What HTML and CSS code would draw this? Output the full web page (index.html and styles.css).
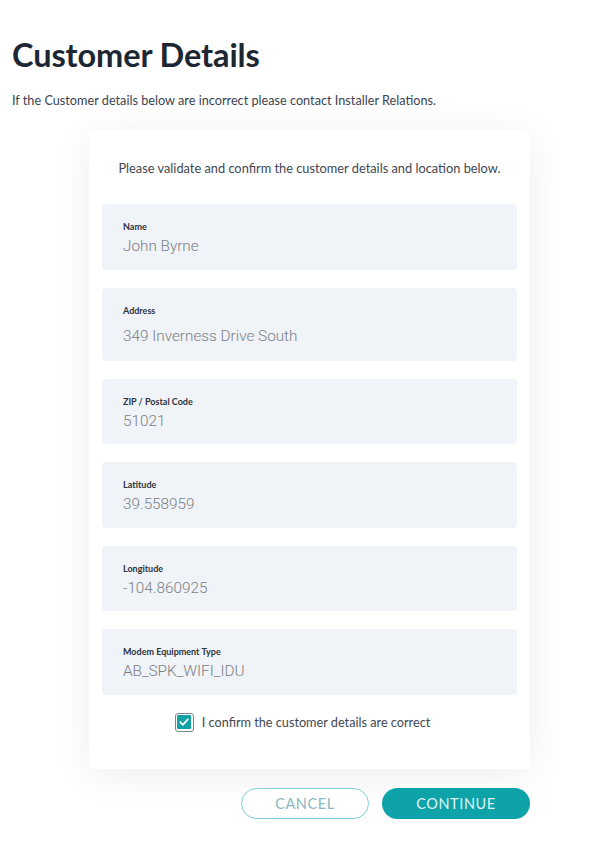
FILE: index.html
```html
<!DOCTYPE html>
<html lang="en">
<head>
    <meta charset="UTF-8">
    <meta name="viewport" content="width=device-width, initial-scale=1.0">
    <title>Customer Details</title>
    <link rel="stylesheet" href="styles.css">
</head>
<body>
    <div class="page">
        <h1>Customer Details</h1>
        <p class="intro">If the Customer details below are incorrect please contact Installer Relations.</p>

        <div class="card">
            <p class="card-intro">Please validate and confirm the customer details and location below.</p>

            <div class="field">
                <span class="field-label">Name</span>
                <span class="field-value">John Byrne</span>
            </div>
            <div class="field field-tall">
                <span class="field-label">Address</span>
                <span class="field-value">349 Inverness Drive South</span>
            </div>
            <div class="field">
                <span class="field-label">ZIP / Postal Code</span>
                <span class="field-value">51021</span>
            </div>
            <div class="field">
                <span class="field-label">Latitude</span>
                <span class="field-value">39.558959</span>
            </div>
            <div class="field">
                <span class="field-label">Longitude</span>
                <span class="field-value">-104.860925</span>
            </div>
            <div class="field">
                <span class="field-label">Modem Equipment Type</span>
                <span class="field-value">AB_SPK_WIFI_IDU</span>
            </div>

            <label class="confirm">
                <span class="checkbox">
                    <svg width="14" height="14" viewBox="0 0 14 14">
                        <rect width="14" height="14" rx="1" fill="#11a2a8"/>
                        <path d="M3.2 7.2 L5.9 9.8 L10.8 4.4" fill="none" stroke="#ffffff" stroke-width="1.8" stroke-linecap="round" stroke-linejoin="round"/>
                    </svg>
                </span>
                I confirm the customer details are correct
            </label>
        </div>

        <div class="actions">
            <button class="btn btn-outline">CANCEL</button>
            <button class="btn btn-primary">CONTINUE</button>
        </div>
    </div>
</body>
</html>
```

FILE: styles.css
```css
body {
    margin: 0;
    background-color: #FFFFFF;
    color: #1f2a36;
    font-family: Lato, "Open Sans", Arial, sans-serif;
}

.page {
    padding: 35px 12px 40px 12px;
}

h1 {
    margin: 0;
    font-size: 32.5px;
    font-weight: bold;
    color: #1c2733;
    letter-spacing: -0.1px;
}

.intro {
    margin: 18px 0 0 0;
    font-size: 12.7px;
    color: #3a4450;
}

.card {
    width: 441px;
    margin: 22px 0 0 77px;
    box-sizing: border-box;
    padding: 30px 13px 37px 13px;
    background-color: #FFFFFF;
    border-radius: 5px;
    box-shadow: 0 6px 40px rgba(0, 0, 0, 0.07);
}

.card-intro {
    margin: 0 0 28px 0;
    text-align: center;
    font-size: 12.8px;
    color: #3f4852;
}

.field {
    display: flex;
    flex-direction: column;
    height: 65.5px;
    box-sizing: border-box;
    padding: 17px 21px 0 21px;
    margin-bottom: 18px;
    background-color: #f0f3f7;
    border-radius: 4px;
}

.field-tall {
    height: 73px;
}

.field-label {
    font-size: 9px;
    font-weight: bold;
    color: #2c333b;
}

.field-value {
    margin-top: 5px;
    font-family: Roboto, Arial, sans-serif;
    font-weight: 300;
    font-size: 15.3px;
    color: #7c8086;
}

.field-tall .field-value {
    margin-top: 11px;
}

.confirm {
    display: flex;
    align-items: center;
    justify-content: center;
    gap: 8px;
    margin-top: 2px;
    padding-right: 14px;
    font-size: 12.7px;
    color: #3f4852;
}

.checkbox {
    display: flex;
    align-items: center;
    justify-content: center;
    width: 19px;
    height: 19px;
    box-sizing: border-box;
    border: 1px solid #7d858c;
    border-radius: 3px;
}

.checkbox svg {
    display: block;
}

.actions {
    display: flex;
    justify-content: flex-end;
    gap: 13px;
    width: 518px;
    margin-top: 19px;
}

.btn {
    height: 31px;
    border-radius: 16px;
    font-family: Lato, "Open Sans", Arial, sans-serif;
    font-size: 14.5px;
    letter-spacing: 0.6px;
    cursor: pointer;
}

.btn-outline {
    width: 128px;
    background-color: #FFFFFF;
    border: 1.5px solid #7fd0d6;
    color: #8ab8c0;
}

.btn-primary {
    width: 148px;
    background-color: #0ea3a8;
    border: none;
    color: #dff4f4;
}
```
